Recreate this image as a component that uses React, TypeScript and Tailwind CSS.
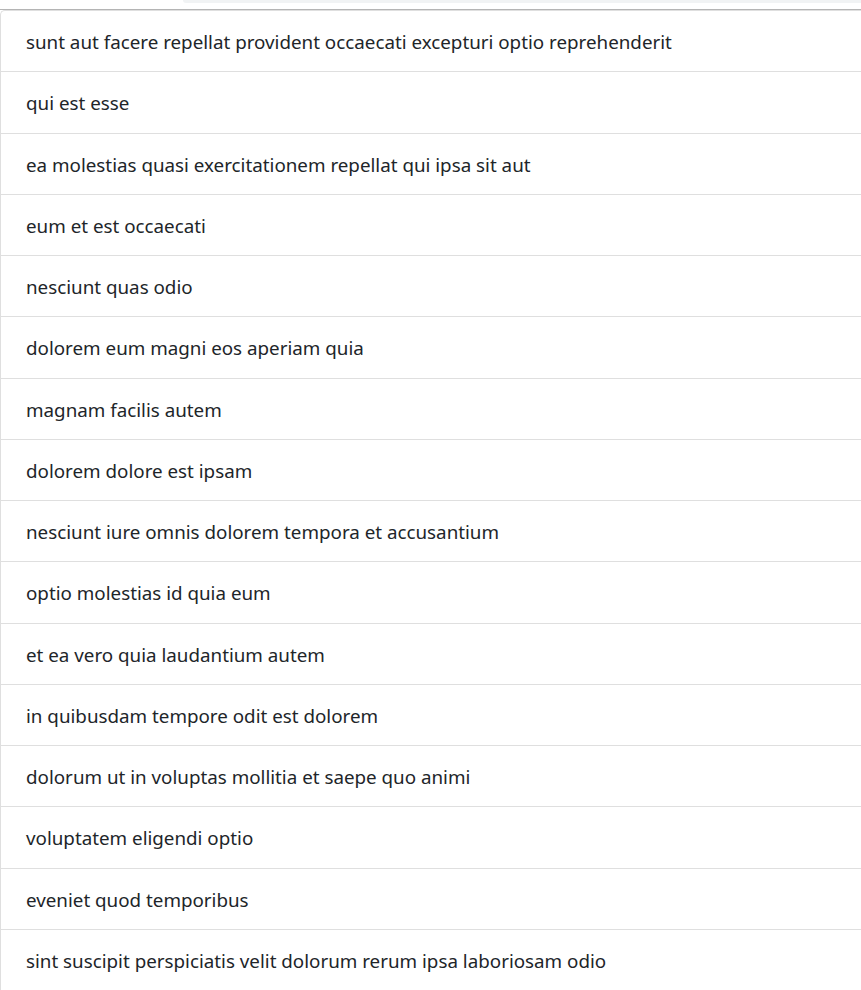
const titles = [
  'sunt aut facere repellat provident occaecati excepturi optio reprehenderit',
  'qui est esse',
  'ea molestias quasi exercitationem repellat qui ipsa sit aut',
  'eum et est occaecati',
  'nesciunt quas odio',
  'dolorem eum magni eos aperiam quia',
  'magnam facilis autem',
  'dolorem dolore est ipsam',
  'nesciunt iure omnis dolorem tempora et accusantium',
  'optio molestias id quia eum',
  'et ea vero quia laudantium autem',
  'in quibusdam tempore odit est dolorem',
  'dolorum ut in voluptas mollitia et saepe quo animi',
  'voluptatem eligendi optio',
  'eveniet quod temporibus',
  'sint suscipit perspiciatis velit dolorum rerum ipsa laboriosam odio',
]

export default function App() {
  return (
    <div className="h-[990px] overflow-hidden bg-white font-['Noto_Sans',sans-serif] text-[#212529]">
      {/* top strip */}
      <div className="flex h-[9px]">
        <div className="w-[183px]" />
        <div className="h-[3px] flex-1 rounded-bl-[14px] bg-[#f1f3f4]" />
      </div>
      <div className="h-px bg-[#b4b4b4]" />

      <ul className="mr-[-4px] rounded-tl-[5px] border-l border-t border-[#dfdfdf]">
        {titles.map((t) => (
          <li
            key={t}
            className="border-b border-[#dfdfdf] px-[25px] pt-[16px] pb-[14px] text-[18.8px] leading-[30.25px]"
          >
            {t}
          </li>
        ))}
      </ul>
    </div>
  )
}
